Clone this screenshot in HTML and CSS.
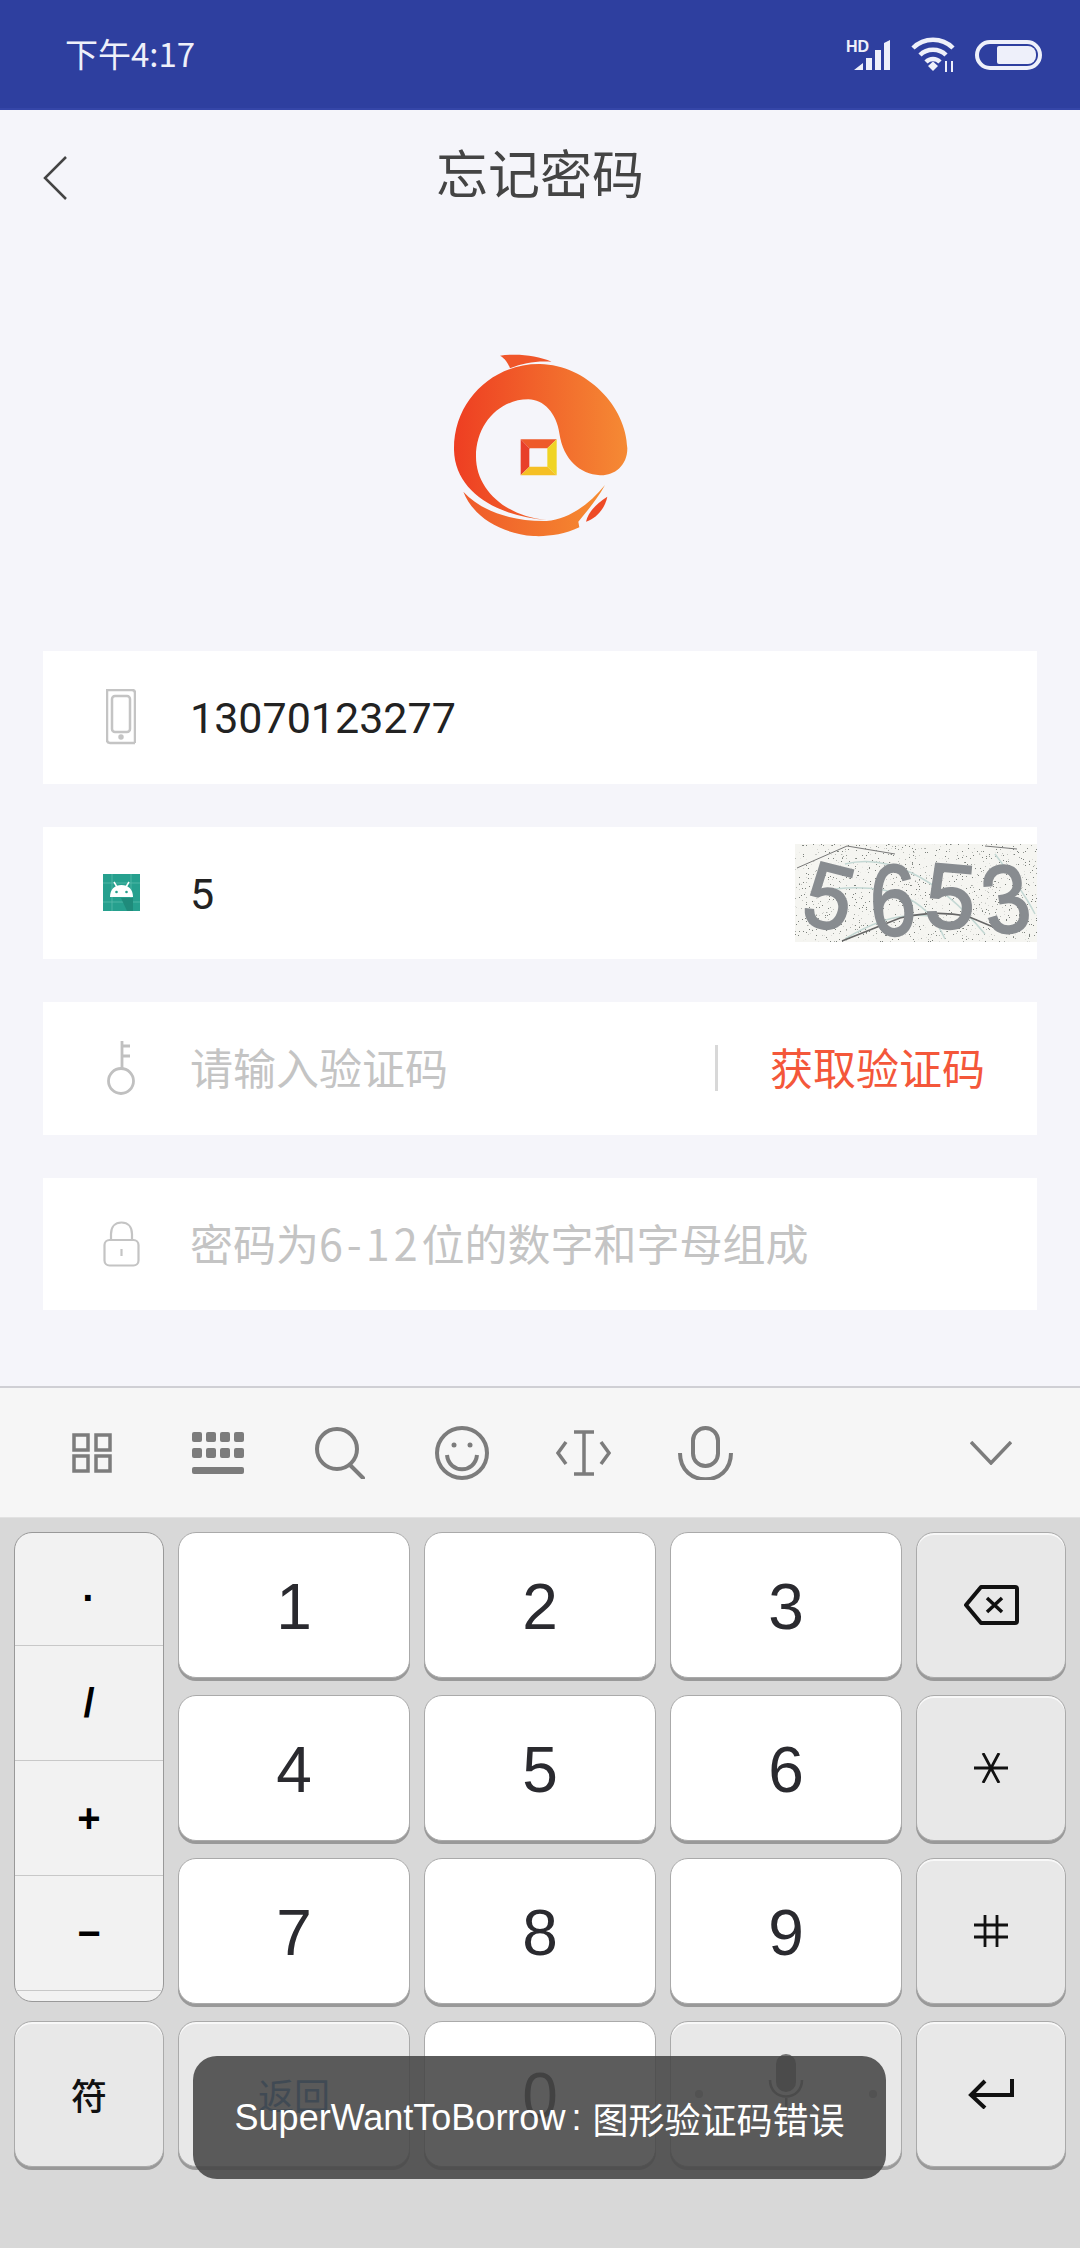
FILE: index.html
```html
<!DOCTYPE html>
<html lang="zh-CN">
<head>
    <meta charset="UTF-8">
    <meta name="viewport" content="width=device-width, initial-scale=1.0">
    <title>忘记密码</title>
    <link rel="stylesheet" href="styles.css">
</head>
<body>
<div class="page">

    <div class="status-bar">
        <span class="status-time">下午4:17</span>
        <div class="status-icons">
            <svg class="ic-signal" viewBox="0 0 45 32" width="45" height="32">
                <text x="0" y="13" class="hd-text">HD</text>
                <path d="M8 31 L17 24 V31Z M20 31 V19 H26 V31Z M29 31 V11 H35 V31Z M38 31 V4 L44 1 V31Z" fill="#eef0fa"/>
            </svg>
            <svg class="ic-wifi" viewBox="0 0 44 36" width="44" height="36" fill="none" stroke="#eef0fa" stroke-width="4.5">
                <path d="M2 11 C13 0 31 0 42 11"/>
                <path d="M9 18 C16 11 28 11 35 18"/>
                <path d="M15 25 C19 21 25 21 29 25"/>
                <path d="M17 29 L22 24.500 L27 29 L22 34Z" fill="#eef0fa" stroke="none"/>
                <path d="M35 24 V35 M41 24 V35" stroke-width="2"/>
            </svg>
            <div class="battery"><div class="battery-fill"></div></div>
        </div>
    </div>

    <div class="nav-bar">
        <svg class="nav-back" viewBox="0 0 24 44" width="24" height="44" fill="none" stroke="#444" stroke-width="2.5">
            <path d="M23 1 L2 22 L23 43"/>
        </svg>
        <h1 class="nav-title">忘记密码</h1>
    </div>

    <div class="logo-wrap">
        <svg viewBox="0 0 840 720" width="280" height="240">
            <defs>
                <linearGradient id="logoGrad" x1="0" y1="0" x2="1" y2="0">
                    <stop offset="0" stop-color="#ee3e22"/>
                    <stop offset="1" stop-color="#f58a34"/>
                </linearGradient>
                <linearGradient id="tailGrad" x1="0" y1="0" x2="1" y2="0">
                    <stop offset="0" stop-color="#ef5a2a"/>
                    <stop offset="1" stop-color="#f68c30"/>
                </linearGradient>
            </defs>
            <path fill="url(#logoGrad)" d="M440 600 C300 590 165 520 162 390 C160 240 280 130 420 132 C560 135 680 260 682 385 C682 440 640 468 600 466 C540 462 490 420 478 340 C470 280 430 238 385 238 C300 238 228 310 228 410 C228 510 320 590 440 600Z"/>
            <path fill="url(#tailGrad)" d="M190 515 C240 570 330 605 440 603 C510 597 570 550 615 495 C590 540 560 575 535 605 L538 622 C490 645 440 650 400 648 C300 640 220 590 190 515Z"/>
            <path fill="#ee4a26" d="M622 530 C615 565 590 595 558 605 C565 575 590 550 622 530Z"/>
            <path fill="#f0562a" d="M300 107 C350 100 410 105 455 125 C410 122 370 128 330 145 C325 130 315 115 300 107Z"/>
            <path fill="#ee5a2a" d="M362 358 H470 L442 385 H388Z"/>
            <path fill="#e83f2a" d="M362 358 L388 385 V440 L362 466Z"/>
            <path fill="#f0d424" d="M470 358 V466 L442 440 V385Z"/>
            <path fill="#f5bf24" d="M362 466 L388 440 H442 L470 466Z"/>
        </svg>
    </div>

    <div class="form">
        <div class="field">
            <div class="field-icon">
                <svg viewBox="0 0 30 56" width="30" height="56" fill="none" stroke="#c4c4c4" stroke-width="2.500">
                    <path d="M29 54 H4 Q1 54 1 51 V1 H26 Q29 1 29 4 V54"/>
                    <rect x="6" y="7" width="18" height="36" rx="3"/>
                    <circle cx="15" cy="48" r="1.500" fill="#c4c4c4"/>
                </svg>
            </div>
            <span class="field-value">13070123277</span>
        </div>

        <div class="field">
            <div class="field-icon">
                <svg viewBox="0 0 37 37" width="37" height="37">
                    <rect width="37" height="37" fill="#26a08e"/>
                    <path d="M0 9 H37 M9 0 V37 M28 0 V37 M0 28 H37" stroke="#58bbab" stroke-width="0.8"/>
                    <path d="M18 24 H30 V37 H24Z" fill="#1f8b7b"/>
                    <path d="M7 23 C7 15 12 11 18.500 11 C25 11 30 15 30 23Z" fill="#fff"/>
                    <path d="M11 8 L14 13 M26 8 L23 13" stroke="#fff" stroke-width="1.500"/>
                    <circle cx="13.500" cy="18" r="1.300" fill="#26a08e"/>
                    <circle cx="23.500" cy="18" r="1.300" fill="#26a08e"/>
                </svg>
            </div>
            <span class="field-value">5</span>
            <svg class="captcha" viewBox="0 0 242 98" width="242" height="98">
                <defs>
                    <filter id="speckle" x="0" y="0" width="100%" height="100%">
                        <feTurbulence type="fractalNoise" baseFrequency="0.7" numOctaves="2" seed="7"/>
                        <feColorMatrix values="0 0 0 0 0.2  0 0 0 0 0.22  0 0 0 0 0.2  0 0 0 20 -14"/>
                    </filter>
                </defs>
                <rect width="242" height="98" fill="#f5f5f1"/>
                <rect width="242" height="98" filter="url(#speckle)"/>
                <g fill="none" stroke="#c4d8d4" stroke-width="1.500">
                    <path d="M50 20 C90 10 140 30 190 90"/>
                    <path d="M40 45 C90 40 130 50 150 95"/>
                    <path d="M50 95 C90 70 120 70 135 72"/>
                    <path d="M200 10 C215 30 230 50 240 70"/>
                </g>
                <path d="M2 24 L52 2 L100 10 M190 2 L222 5" fill="none" stroke="#777" stroke-width="1"/>
                <path d="M47 97 L105 74 C130 68 150 68 172 72 L215 90" fill="none" stroke="#666" stroke-width="1.600"/>
                <g class="captcha-digits">
                    <text transform="translate(4 78) rotate(14) scale(0.92 1)">5</text>
                    <text transform="translate(76 92) rotate(-2) scale(0.9 1.1)">6</text>
                    <text transform="translate(128 82) rotate(5) scale(0.98 1)">5</text>
                    <text transform="translate(194 92) rotate(-10) scale(0.9 1.05)">3</text>
                </g>
            </svg>
        </div>

        <div class="field">
            <div class="field-icon">
                <svg viewBox="0 0 28 54" width="28" height="54" fill="none" stroke="#c0c0c0" stroke-width="2.800">
                    <circle cx="14" cy="40" r="12.500"/>
                    <path d="M15 27 V0 M15 5 H23 M15 15 H23"/>
                </svg>
            </div>
            <span class="placeholder field-grow">请输入验证码</span>
            <span class="field-divider"></span>
            <span class="get-code">获取验证码</span>
        </div>

        <div class="field">
            <div class="field-icon">
                <svg viewBox="0 0 37 46" width="37" height="46" fill="none" stroke="#c4c4c4" stroke-width="2.200">
                    <path d="M8 19 V13 C8 6 12 1.500 18.500 1.500 C25 1.500 29 6 29 13 V19"/>
                    <rect x="1.500" y="19" width="34" height="25.500" rx="5"/>
                    <path d="M18.500 28 V35"/>
                </svg>
            </div>
            <span class="placeholder">密码为<span class="digits-wide">6-12</span>位的数字和字母组成</span>
        </div>
    </div>

    <div class="keyboard">
        <div class="kb-tools">
            <svg viewBox="0 0 40 40" width="40" height="40" class="tool t-grid" fill="none" stroke="#7c7c7c" stroke-width="3.500">
                <rect x="2" y="2" width="14" height="15"/><rect x="24" y="2" width="14" height="15"/>
                <rect x="2" y="23" width="14" height="15"/><rect x="24" y="23" width="14" height="15"/>
            </svg>
            <svg viewBox="0 0 52 42" width="52" height="42" class="tool t-keys" fill="#7c7c7c">
                <rect x="0" y="0" width="10" height="10" rx="2"/><rect x="14" y="0" width="10" height="10" rx="2"/><rect x="28" y="0" width="10" height="10" rx="2"/><rect x="42" y="0" width="10" height="10" rx="2"/>
                <rect x="0" y="16" width="10" height="10" rx="2"/><rect x="14" y="16" width="10" height="10" rx="2"/><rect x="28" y="16" width="10" height="10" rx="2"/><rect x="42" y="16" width="10" height="10" rx="2"/>
                <rect x="0" y="35" width="52" height="7" rx="2"/>
            </svg>
            <svg viewBox="0 0 50 52" width="50" height="52" class="tool t-search" fill="none" stroke="#7c7c7c" stroke-width="4">
                <circle cx="22" cy="22" r="20"/><path d="M35 38 L48 51" stroke-linecap="round"/>
            </svg>
            <svg viewBox="0 0 54 54" width="54" height="54" class="tool t-smile" fill="none" stroke="#7c7c7c" stroke-width="4">
                <circle cx="27" cy="27" r="25"/>
                <path d="M12 29 C14 48 40 48 42 29"/>
                <circle cx="19" cy="19" r="2.500" fill="#7c7c7c" stroke="none"/><circle cx="35" cy="19" r="2.500" fill="#7c7c7c" stroke="none"/>
            </svg>
            <svg viewBox="0 0 55 46" width="55" height="46" class="tool t-cursor" fill="none" stroke="#7c7c7c" stroke-width="3.500">
                <path d="M18 2 H38 M18 44 H38 M28 2 V44"/>
                <path d="M10 12 L2 23 L10 34 M45 12 L53 23 L45 34"/>
            </svg>
            <svg viewBox="0 0 55 54" width="55" height="54" class="tool t-mic" fill="none" stroke="#7c7c7c" stroke-width="4">
                <rect x="15" y="2" width="25" height="38" rx="12.500"/>
                <path d="M2 27 C2 62 53 62 53 27"/>
            </svg>
            <svg viewBox="0 0 42 24" width="42" height="24" class="tool t-hide" fill="none" stroke="#7c7c7c" stroke-width="3.500">
                <path d="M1 1 L21 22 L41 1"/>
            </svg>
        </div>

        <div class="kb-keys">
            <div class="key-col">
                <div class="key-sym key-sym-dot">·</div>
                <div class="key-sym">/</div>
                <div class="key-sym">+</div>
                <div class="key-sym">−</div>
                <div class="key-sym key-sym-end"></div>
            </div>
            <div class="key">1</div>
            <div class="key">2</div>
            <div class="key">3</div>
            <div class="key key-grey">
                <svg viewBox="0 0 56 40" width="56" height="40" fill="none" stroke="#111" stroke-width="4">
                    <path d="M52 2 H18 L3 20 L18 38 H52 Q54 38 54 36 V4 Q54 2 52 2Z" stroke-linejoin="round"/>
                    <path d="M24 13 L39 27 M39 13 L24 27" stroke-width="3.500"/>
                </svg>
            </div>
            <div class="key">4</div>
            <div class="key">5</div>
            <div class="key">6</div>
            <div class="key key-grey">
                <svg viewBox="0 0 34 30" width="34" height="30" fill="none" stroke="#111" stroke-width="2.800">
                    <path d="M0 15 H34 M9 0 L25 30 M25 0 L9 30"/>
                </svg>
            </div>
            <div class="key">7</div>
            <div class="key">8</div>
            <div class="key">9</div>
            <div class="key key-grey">
                <svg viewBox="0 0 34 32" width="34" height="32" fill="none" stroke="#111" stroke-width="2.800">
                    <path d="M11 0 V32 M23 0 V32 M0 10 H34 M0 22 H34"/>
                </svg>
            </div>
            <div class="key key-grey key-cn">符</div>
            <div class="key key-grey key-back">返回</div>
            <div class="key">0</div>
            <div class="key key-grey">
                <svg viewBox="0 0 200 60" width="200" height="60" class="key-mic" fill="#707070">
                    <rect x="90" y="0" width="20" height="38" rx="10"/>
                    <path d="M84 26 C84 48 116 48 116 26" fill="none" stroke="#707070" stroke-width="2.500"/>
                    <rect x="99" y="44" width="2.500" height="14"/>
                    <circle cx="13" cy="40" r="4" fill="#a8a8a8"/>
                    <circle cx="187" cy="40" r="4" fill="#a8a8a8"/>
                </svg>
            </div>
            <div class="key key-grey">
                <svg viewBox="0 0 46 30" width="46" height="30" fill="none" stroke="#111" stroke-width="4">
                    <path d="M44 0 V16 H4 M17 2 L3 16 L17 29"/>
                </svg>
            </div>
        </div>
    </div>

    <div class="toast">SuperWantToBorrow<span class="toast-colon">:</span>图形验证码错误</div>
</div>
</body>
</html>
```

FILE: styles.css
```css
* {
    box-sizing: border-box;
}
html, body {
    margin: 0;
    padding: 0;
}
body {
    font-family: "Noto Sans CJK SC", Roboto, sans-serif;
    background-color: #f5f5fa;
}
.page {
    position: relative;
    width: 1080px;
    height: 2248px;
    display: flex;
    flex-direction: column;
    overflow: hidden;
}

/* status bar */
.status-bar {
    height: 110px;
    flex-shrink: 0;
    background-color: #2e3f9f;
    border-bottom: 2px solid #3546a8;
    display: flex;
    align-items: center;
    justify-content: space-between;
    padding: 0 38px 0 65px;
    color: #eef0fa;
}
.status-time {
    font-size: 33px;
    line-height: 1;
    margin-bottom: 2px;
}
.status-icons {
    display: flex;
    align-items: center;
    gap: 20px;
    margin-top: 2px;
}
.hd-text {
    font-family: "Liberation Sans", sans-serif;
    font-size: 16px;
    font-weight: 700;
    fill: #eef0fa;
}
.battery {
    width: 67px;
    height: 30px;
    border: 4px solid #eef0fa;
    border-radius: 15px;
    padding: 2px 2px 2px 18px;
}
.battery-fill {
    height: 100%;
    background-color: #eef0fa;
    border-radius: 2px 8px 8px 2px;
}

/* top nav */
.nav-bar {
    height: 130px;
    flex-shrink: 0;
    position: relative;
    display: flex;
    align-items: center;
    justify-content: center;
}
.nav-back {
    position: absolute;
    left: 43px;
    top: 46px;
}
.nav-title {
    margin: 0 0 6px;
    font-size: 52px;
    font-weight: 400;
    color: #444;
    line-height: 1;
}

.logo-wrap {
    display: flex;
    justify-content: center;
    margin-top: 80px;
}

/* form */
.form {
    display: flex;
    flex-direction: column;
    gap: 43px;
    margin: 91px 43px 0;
}
.field {
    height: 132.500px;
    background-color: #fff;
    display: flex;
    align-items: center;
    font-size: 43px;
}
.field-icon {
    width: 156px;
    margin-right: -9px;
    flex-shrink: 0;
    display: flex;
    justify-content: center;
}
.field-value {
    font-family: Roboto, sans-serif;
    color: #222;
    flex: 1;
    margin-top: 2px;
}
.placeholder {
    color: #c4c4c4;
    margin-bottom: 4px;
}
.field-grow {
    flex: 1;
}
.digits-wide {
    letter-spacing: 4px;
}
.captcha {
    flex-shrink: 0;
}
.captcha-digits {
    font-family: "Liberation Sans", sans-serif;
    font-size: 92px;
    fill: #888c90;
    stroke: #888c90;
    stroke-width: 2px;
}
.field-divider {
    width: 3px;
    height: 46px;
    background-color: #d8d8d8;
    margin-right: 52px;
}
.get-code {
    color: #f4573a;
    margin-right: 52px;
    margin-bottom: 4px;
}

/* keyboard */
.keyboard {
    margin-top: auto;
    height: 862px;
    flex-shrink: 0;
    background-color: #d8d8d8;
    display: flex;
    flex-direction: column;
}
.kb-tools {
    height: 132px;
    flex-shrink: 0;
    background-color: #f6f6f6;
    border-top: 2px solid #cfcfd4;
    border-bottom: 1px solid #e2e2e2;
    display: flex;
    align-items: center;
}
.tool {
    flex-shrink: 0;
}
.t-grid { margin-left: 72px; }
.t-keys { margin-left: 80px; }
.t-search { margin-left: 71px; }
.t-smile { margin-left: 70px; }
.t-cursor { margin-left: 67px; }
.t-mic { margin-left: 67px; }
.t-hide { margin-left: 237px; }

.kb-keys {
    display: grid;
    grid-template-columns: 150px 232px 232px 232px 150px;
    grid-template-rows: repeat(4, 146px);
    column-gap: 14px;
    row-gap: 17px;
    padding: 14px 14px 0;
}
.key {
    background-color: #fff;
    border: 1px solid #aaa;
    border-radius: 18px;
    box-shadow: 0 3px 0 #999;
    display: flex;
    align-items: center;
    justify-content: center;
    font-family: "Liberation Sans", sans-serif;
    font-size: 64px;
    color: #2a2a2f;
    padding-top: 4px;
}
.key-grey {
    background-color: #e8e8e8;
    box-shadow: 0 3px 0 #999, inset 0 2px 0 #f8f8f8;
    padding-top: 0;
}
.key-cn {
    font-family: "Noto Sans CJK SC", sans-serif;
    font-size: 36px;
    font-weight: 500;
    color: #111;
}
.key-back {
    font-family: "Noto Sans CJK SC", sans-serif;
    font-size: 36px;
    color: #1a6ab8;
}
.key-mic {
    margin-bottom: 20px;
}
.key-col {
    grid-row: 1 / span 3;
    background-color: #f2f2f2;
    border: 1px solid #999;
    border-radius: 18px;
    overflow: hidden;
    display: flex;
    flex-direction: column;
    height: 470px;
}
.key-sym {
    height: 115px;
    flex-shrink: 0;
    border-bottom: 1px solid #c8c8c8;
    display: flex;
    align-items: center;
    justify-content: center;
    font-family: "Liberation Sans", sans-serif;
    font-size: 40px;
    font-weight: 700;
    color: #000;
}
.key-sym-dot {
    height: 113px;
    padding-top: 18px;
}
.key-sym-end {
    flex: 1;
    border-bottom: none;
}

/* toast over the keyboard */
.toast {
    position: absolute;
    left: 193px;
    top: 2056px;
    width: 693px;
    height: 123px;
    background-color: rgba(70, 70, 70, 0.88);
    border-radius: 24px;
    color: #fff;
    font-family: "Liberation Sans", "Noto Sans CJK SC", sans-serif;
    font-size: 36px;
    display: flex;
    align-items: center;
    justify-content: center;
    white-space: nowrap;
}
.toast-colon {
    margin: 0 11px 0 6px;
}
```
